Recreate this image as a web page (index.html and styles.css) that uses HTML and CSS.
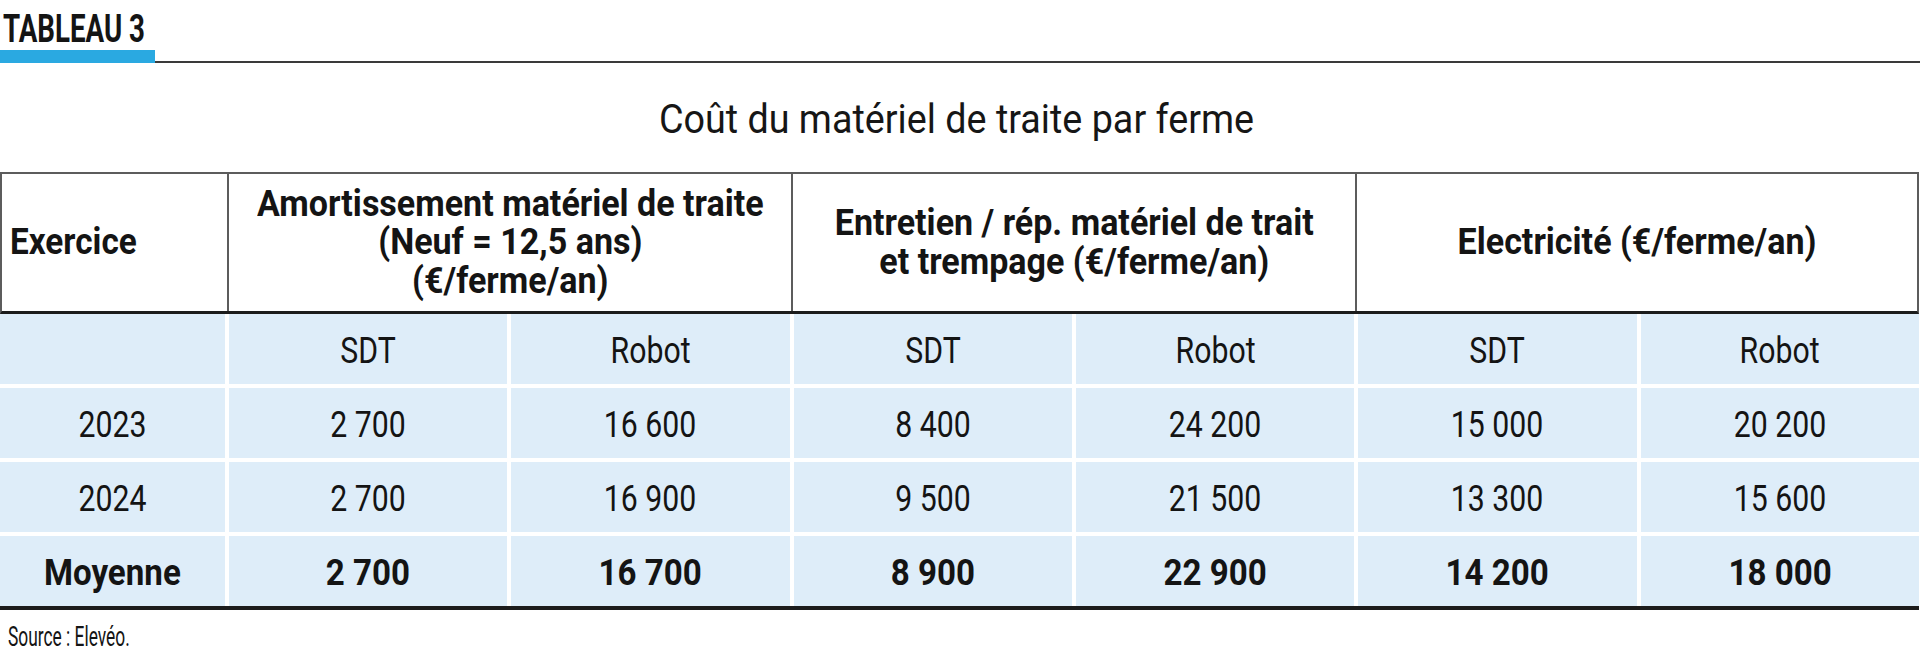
FILE: index.html
```html
<!DOCTYPE html>
<html lang="fr">
<head>
<meta charset="utf-8">
<title>Tableau 3</title>
<link rel="stylesheet" href="styles.css">
</head>
<body>
<div class="sheet">
  <div class="kicker"><span class="kicker-text">TABLEAU 3</span></div>
  <div class="rule"><div class="rule-bar"></div><div class="rule-line"></div></div>
  <div class="title"><span class="title-text">Coût du matériel de traite par ferme</span></div>

  <div class="thead">
    <div class="th th-first"><span class="hx hx-left">Exercice</span></div>
    <div class="th"><span class="hx">Amortissement matériel de traite<br>(Neuf = 12,5 ans)<br>(€/ferme/an)</span></div>
    <div class="th"><span class="hx">Entretien / rép. matériel de trait<br>et trempage (€/ferme/an)</span></div>
    <div class="th"><span class="hx">Electricité (€/ferme/an)</span></div>
  </div>

  <div class="tbody">
    <div class="td"></div>
    <div class="td"><span class="cx">SDT</span></div>
    <div class="td"><span class="cx">Robot</span></div>
    <div class="td"><span class="cx">SDT</span></div>
    <div class="td"><span class="cx">Robot</span></div>
    <div class="td"><span class="cx">SDT</span></div>
    <div class="td"><span class="cx">Robot</span></div>

    <div class="td"><span class="cx">2023</span></div>
    <div class="td"><span class="cx">2 700</span></div>
    <div class="td"><span class="cx">16 600</span></div>
    <div class="td"><span class="cx">8 400</span></div>
    <div class="td"><span class="cx">24 200</span></div>
    <div class="td"><span class="cx">15 000</span></div>
    <div class="td"><span class="cx">20 200</span></div>

    <div class="td"><span class="cx">2024</span></div>
    <div class="td"><span class="cx">2 700</span></div>
    <div class="td"><span class="cx">16 900</span></div>
    <div class="td"><span class="cx">9 500</span></div>
    <div class="td"><span class="cx">21 500</span></div>
    <div class="td"><span class="cx">13 300</span></div>
    <div class="td"><span class="cx">15 600</span></div>

    <div class="td td-bold"><span class="cx">Moyenne</span></div>
    <div class="td td-bold"><span class="cx">2 700</span></div>
    <div class="td td-bold"><span class="cx">16 700</span></div>
    <div class="td td-bold"><span class="cx">8 900</span></div>
    <div class="td td-bold"><span class="cx">22 900</span></div>
    <div class="td td-bold"><span class="cx">14 200</span></div>
    <div class="td td-bold"><span class="cx">18 000</span></div>
  </div>

  <div class="source"><span class="source-text">Source : Elevéo.</span></div>
</div>
</body>
</html>
```

FILE: styles.css
```css
html, body {
  margin: 0;
  padding: 0;
  background: #ffffff;
}

body {
  font-family: Roboto, "Liberation Sans", sans-serif;
  color: #141414;
}

.sheet {
  width: 1920px;
}

/* Kicker "TABLEAU 3" */
.kicker {
  height: 43px;
  padding: 7px 0 0 3px;
  font-size: 39px;
  line-height: 45px;
  font-weight: 700;
  white-space: nowrap;
}

.kicker-text {
  display: inline-block;
  transform: scaleX(0.71);
  transform-origin: left center;
}

.rule {
  display: flex;
  align-items: flex-end;
  height: 13px;
}

.rule-bar {
  width: 155px;
  height: 13px;
  background: #2aa9e1;
}

.rule-line {
  flex: 1;
  height: 2px;
  background: #3a3a3a;
}

/* Title */
.title {
  padding: 34px 8px 30px 0;
  font-size: 41px;
  line-height: 45px;
  text-align: center;
  color: #161616;
  white-space: nowrap;
}

.title-text {
  display: inline-block;
  transform: scaleX(0.92);
}

/* Header */
.thead {
  box-sizing: border-box;
  width: 1919px;
  height: 142px;
  display: grid;
  grid-template-columns: 225px 564px 564px 1fr;
  border-top: 2px solid #5c5c5c;
  border-left: 2px solid #5c5c5c;
  border-right: 2px solid #5c5c5c;
  border-bottom: 3px solid #1c1c1c;
}

.th {
  display: flex;
  align-items: center;
  justify-content: center;
  text-align: center;
  border-left: 2px solid #5c5c5c;
  font-size: 37px;
  line-height: 38.5px;
  font-weight: 700;
  white-space: nowrap;
}

.th-first {
  border-left: none;
  justify-content: flex-start;
  text-align: left;
  padding-left: 8px;
}

.hx {
  display: inline-block;
  transform: scaleX(0.92);
}

.hx-left {
  transform: scaleX(0.9);
  transform-origin: left center;
}

/* Body */
.tbody {
  width: 1919px;
  display: grid;
  grid-template-columns: 225px repeat(6, 1fr);
  grid-auto-rows: 70px;
  gap: 4px;
  background: #ffffff;
  border-bottom: 4px solid #1c1c1c;
}

.td {
  display: flex;
  align-items: center;
  justify-content: center;
  padding-top: 4px;
  box-sizing: border-box;
  background: #deedf9;
  font-size: 36px;
  white-space: nowrap;
}

.cx {
  display: inline-block;
  transform: scaleX(0.84);
}

.td-bold {
  font-weight: 700;
}

.td-bold .cx {
  transform: scaleX(0.92);
}

/* Source */
.source {
  margin-top: 11px;
  padding-left: 8px;
  font-size: 28px;
  line-height: 32px;
  white-space: nowrap;
}

.source-text {
  display: inline-block;
  transform: scaleX(0.62);
  transform-origin: left center;
}
```
